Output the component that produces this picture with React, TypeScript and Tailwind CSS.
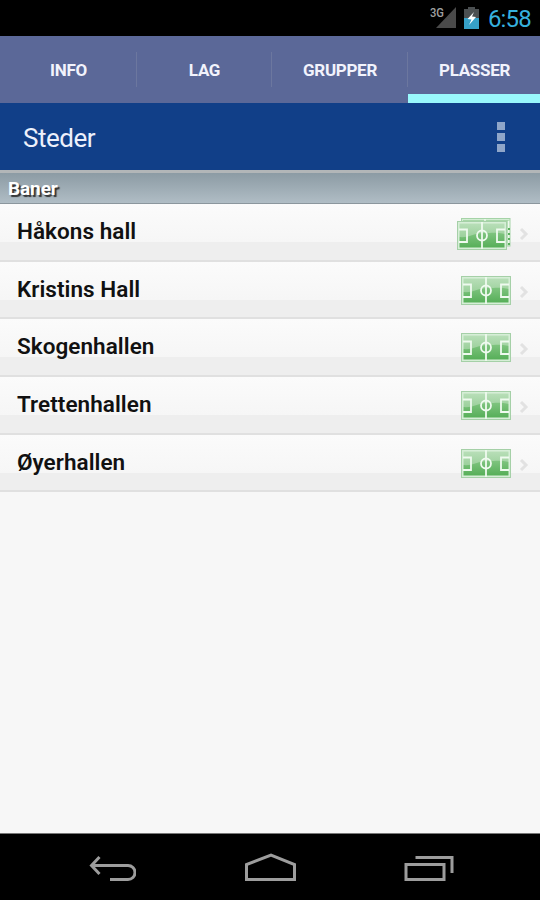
import React from 'react';

const tabs = ['INFO', 'LAG', 'GRUPPER', 'PLASSER'];

const places = [
  { name: 'Håkons hall', stacked: true },
  { name: 'Kristins Hall', stacked: false },
  { name: 'Skogenhallen', stacked: false },
  { name: 'Trettenhallen', stacked: false },
  { name: 'Øyerhallen', stacked: false },
];

function StatusBar() {
  return (
    <div className="flex h-9 shrink-0 items-center justify-end bg-black pr-[9px]">
      <svg width="27" height="24" viewBox="0 0 27 24" className="mr-[7px]">
        <text x="0" y="10.500" fontSize="12" fontWeight="500" textLength="14" lengthAdjust="spacingAndGlyphs" fill="#a0a0a0">3G</text>
        <path d="M26 1v21H6z" fill="#4a4a4a" />
      </svg>
      <svg width="15" height="22" viewBox="0 0 15 22" className="mr-[9px]">
        <path d="M4 0h7v2h4v9H0V2h4z" fill="#4b4f51" />
        <path d="M0 11h15v11H0z" fill="#36a0c7" />
        <path d="M10 5 3.500 12l4 .5L5 18l7-8-4-.5z" fill="#fff" />
      </svg>
      <span className="pt-[2px] text-[24px] leading-none tracking-[-0.8px] text-[#36b1df]">6:58</span>
    </div>
  );
}

function Pitch({ stacked }: { stacked: boolean }) {
  return (
    <svg width="54" height="33" viewBox="0 0 54 33" className="block">
      <defs>
        <linearGradient id="grass" x1="0" y1="0" x2="0" y2="1">
          <stop offset="0" stopColor="#b9dfb9" />
          <stop offset="1" stopColor="#85c585" />
        </linearGradient>
        <linearGradient id="shade" x1="0" y1="0" x2="0" y2="1">
          <stop offset="0" stopColor="#7fc47f" />
          <stop offset="1" stopColor="#55ae57" />
        </linearGradient>
      </defs>
      {stacked && (
        <g>
          <rect x="4.500" y=".5" width="48.500" height="27.500" fill="#d3edd3" stroke="#a5d3a7" />
          <rect x="6" y="2" width="45.500" height="25" fill="#a7d7a7" />
          <path d="M28 1v3M51.500 3v24" stroke="#eef9ee" strokeWidth="1.5" />
          <path d="M52 10v17" stroke="#5bb15e" strokeWidth="2" strokeDasharray="2 3" />
        </g>
      )}
      <g transform={stacked ? 'translate(0 3)' : 'translate(4 0)'}>
        <rect x=".5" y=".5" width="49" height="28" fill="#d5edd6" stroke="#a5d0a7" />
        <rect x="2" y="2" width="46" height="25" fill="url(#grass)" />
        <path d="M2 16C13 17 17 12 26 12c9 0 14-1 22 1v14H2z" fill="url(#shade)" />
        <rect x="2" y="2" width="46" height="25" fill="none" stroke="#d8f0d8" />
        <g fill="none" stroke="#effaef" strokeWidth="1.8">
          <path d="M25 1v27" />
          <path d="M2 8.500h8v12.500H2M48 8.500h-8v12.500H48" />
          <circle cx="25" cy="14.500" r="5" />
        </g>
      </g>
    </svg>
  );
}

function NavBar() {
  return (
    <div className="flex h-[67px] shrink-0 items-center justify-between border-t border-[#777] bg-black pt-px pr-[86px] pl-[88px]">
      <svg width="48" height="28" viewBox="0 0 48 28" fill="none" stroke="#9d9d9d" strokeWidth="3">
        <path d="M11.500 3 3.500 11.500l8 8.500M3.500 11.500H40a7 7 0 0 1 0 14H22" />
      </svg>
      <svg width="52" height="30" viewBox="0 0 52 30" fill="none" stroke="#9d9d9d" strokeWidth="3">
        <path d="M2.500 26.500V11.500L27 2l23.500 9.500v15z" />
      </svg>
      <svg width="50" height="28" viewBox="0 0 50 28" fill="none" stroke="#9d9d9d" strokeWidth="3">
        <path d="M2 10.500h38v15H2zM11.500 3.500h36.500V19" />
      </svg>
    </div>
  );
}

export default function App() {
  return (
    <div className="flex h-[900px] w-[540px] flex-col overflow-hidden bg-[#f7f7f7] font-['Roboto',sans-serif]">
      <StatusBar />

      <div className="grid h-[67px] shrink-0 grid-cols-[137px_135px_136px_132px] bg-[#5b6898]">
        {tabs.map((tab, i) => (
          <div key={tab} className={i === 3 ? 'border-b-[9px] border-[#99f8fc]' : ''}>
            <div className="flex items-center pt-[15px]">
              <span className="flex-1 pt-px pl-px text-center text-[17px] leading-[36px] font-bold tracking-[-0.3px] text-[#f2f3fc]">{tab}</span>
              {i < 3 && <span className="h-[35px] w-px bg-[#6c779f]" />}
            </div>
          </div>
        ))}
      </div>

      <div className="flex h-[67px] shrink-0 items-center justify-between bg-[#113f88] pr-[35px] pl-[23px]">
        <h1 className="pt-[3px] text-[26px] leading-none tracking-[-0.5px] text-[#edf0fb]">Steder</h1>
        <div className="flex flex-col gap-[3px]">
          <span className="size-2 bg-[#8fa6c9]" />
          <span className="size-2 bg-[#8fa6c9]" />
          <span className="size-2 bg-[#8fa6c9]" />
        </div>
      </div>

      <div className="flex h-[34px] shrink-0 items-center border-t-[3px] border-b border-t-[#b2b6b8] border-b-[#8b969d] bg-linear-to-b from-[#8c9ba4] to-[#b0bdc5] pl-2">
        <span className="text-[19px] leading-none font-bold tracking-[-0.1px] text-white [text-shadow:2px_2px_1px_#333]">Baner</span>
      </div>

      <ul className="flex-1">
        {places.map((place) => (
          <li
            key={place.name}
            className="flex h-[57.7px] items-start border-b-2 border-[#e0e0e0] bg-[linear-gradient(#fbfbfb,#f6f6f6_38px,#eeeeee_38px)] pr-[11px] pl-[17px]"
          >
            <span className="pt-[13px] text-[22.5px] leading-7 font-semibold tracking-[0.05px] text-[#111]">{place.name}</span>
            <span className="ml-auto pt-[14px]">
              <Pitch stacked={place.stacked} />
            </span>
            <svg width="10" height="16" viewBox="0 0 10 16" className="mt-[22px] ml-2" fill="none" stroke="#e2e2e2" strokeWidth="3">
              <path d="m2 3 5 5-5 5" />
            </svg>
          </li>
        ))}
      </ul>

      <NavBar />
    </div>
  );
}
